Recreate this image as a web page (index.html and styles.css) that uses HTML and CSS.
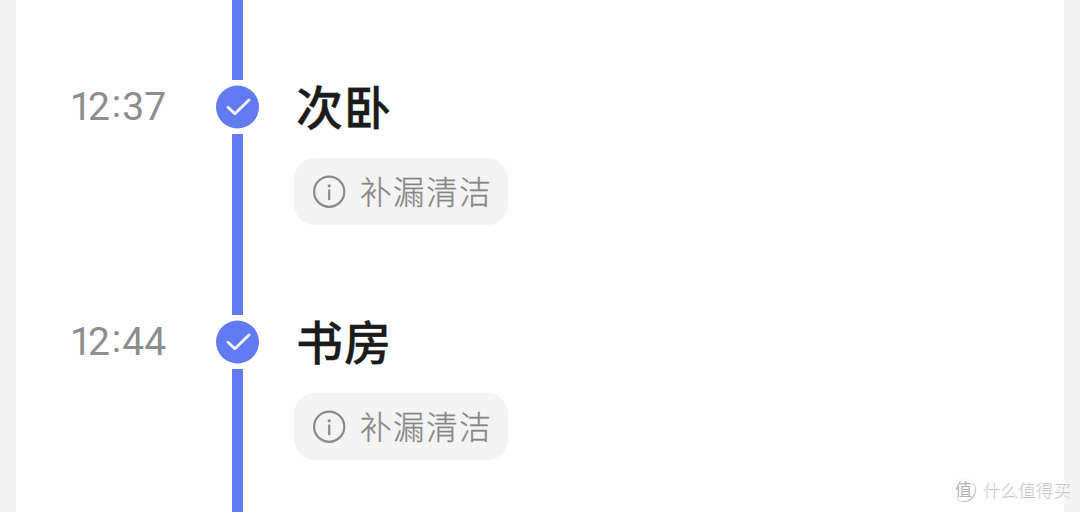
FILE: index.html
```html
<!DOCTYPE html>
<html lang="zh-CN">
<head>
<meta charset="utf-8">
<title>清洁记录</title>
<link rel="stylesheet" href="styles.css">
</head>
<body>
<main class="card">
  <section class="row">
    <time class="time"><span class="lead">1</span>2<span class="colon">:</span>37</time>
    <div class="rail">
      <span class="line line-top"></span>
      <svg class="check" viewBox="0 0 44 44"><circle cx="21.5" cy="22" r="21.5"/><path d="M12 22.3 18.9 28.8 33 15"/></svg>
      <span class="line line-bottom"></span>
    </div>
    <div class="content">
      <h2 class="room">次卧</h2>
      <div class="chip">
        <svg class="info" viewBox="0 0 34 34"><circle class="ring" cx="17.2" cy="16.7" r="15.1"/><circle class="dot" cx="17.2" cy="10.8" r="1.6"/><path d="M17.2 14.5V25"/></svg>
        <span class="label">补漏清洁</span>
      </div>
    </div>
  </section>
  <section class="row">
    <time class="time"><span class="lead">1</span>2<span class="colon">:</span>44</time>
    <div class="rail">
      <span class="line line-top"></span>
      <svg class="check" viewBox="0 0 44 44"><circle cx="21.5" cy="22" r="21.5"/><path d="M12 22.3 18.9 28.8 33 15"/></svg>
      <span class="line line-bottom"></span>
    </div>
    <div class="content">
      <h2 class="room">书房</h2>
      <div class="chip">
        <svg class="info" viewBox="0 0 34 34"><circle class="ring" cx="17.2" cy="16.7" r="15.1"/><circle class="dot" cx="17.2" cy="10.8" r="1.6"/><path d="M17.2 14.5V25"/></svg>
        <span class="label">补漏清洁</span>
      </div>
    </div>
  </section>
</main>
<div class="watermark"><span class="seal">值</span><span class="brand">什么值得买</span></div>
</body>
</html>
```
FILE: styles.css
```css
* { box-sizing: border-box; }
body {
  margin: 0;
  height: 512px;
  padding: 0 16px;
  overflow: hidden;
  background: #f4f4f4;
  font-family: "Noto Sans CJK SC", sans-serif;
}
.card { height: 512px; background: #fefefe; overflow: hidden; }
.row { display: flex; height: 235px; }
.row:last-child { height: 277px; }
.time {
  width: 199px;
  padding: 83px 0 0 54px;
  font: 400 39px/48px Roboto, sans-serif;
  color: #8e8e8e;
}
.lead { letter-spacing: -4px; }
.colon { display: inline-block; margin: 0 1px 0 2px; transform: translateY(-3px); }
.rail { width: 45px; display: flex; flex-direction: column; align-items: center; }
.line { width: 11px; background: #637bf2; }
.line-top { height: 80px; }
.line-bottom { flex: 1; }
.check { display: block; width: 44px; height: 44px; margin: 5px 0; flex: none; }
.check circle { fill: #637bf2; }
.check path { fill: none; stroke: #f2f4ff; stroke-width: 2.9; stroke-linecap: round; stroke-linejoin: round; }
.content { padding: 75px 0 0 34px; }
.room {
  margin: 0 0 23px 2px;
  font-size: 47px;
  line-height: 60px;
  font-weight: 500;
  letter-spacing: 1px;
  -webkit-text-stroke: 0.3px #1b1b1b;
  color: #1b1b1b;
}
.chip {
  display: flex;
  align-items: center;
  width: 214px;
  height: 67px;
  padding-left: 18px;
  border-radius: 21px;
  background: #f4f4f4;
}
.info { width: 34px; height: 34px; margin-right: 14px; fill: none; stroke: #8a8a8a; stroke-width: 2.2; }
.info .dot { fill: #8a8a8a; stroke: none; }
.label {
  padding-bottom: 4px;
  font-size: 31.5px;
  line-height: 44px;
  letter-spacing: 1.6px;
  font-weight: 300;
  -webkit-text-stroke: 0.3px #868686;
  color: #868686;
  white-space: nowrap;
}
.watermark {
  position: absolute;
  left: 952px;
  top: 477px;
  display: flex;
  align-items: center;
  gap: 7px;
  color: #fafafa;
  text-shadow: 1px 1px 1px #aaa;
}
.seal {
  width: 23px;
  height: 23px;
  border-radius: 50%;
  border: 1px solid #f4f4f4;
  box-shadow: 1px 1px 1px #c4c4c4;
  font-size: 17px;
  line-height: 19px;
  text-align: center;
  color: #b5b5b5;
  text-shadow: none;
}
.brand { font-size: 17.6px; line-height: 24px; font-weight: 300; white-space: nowrap; }
```
